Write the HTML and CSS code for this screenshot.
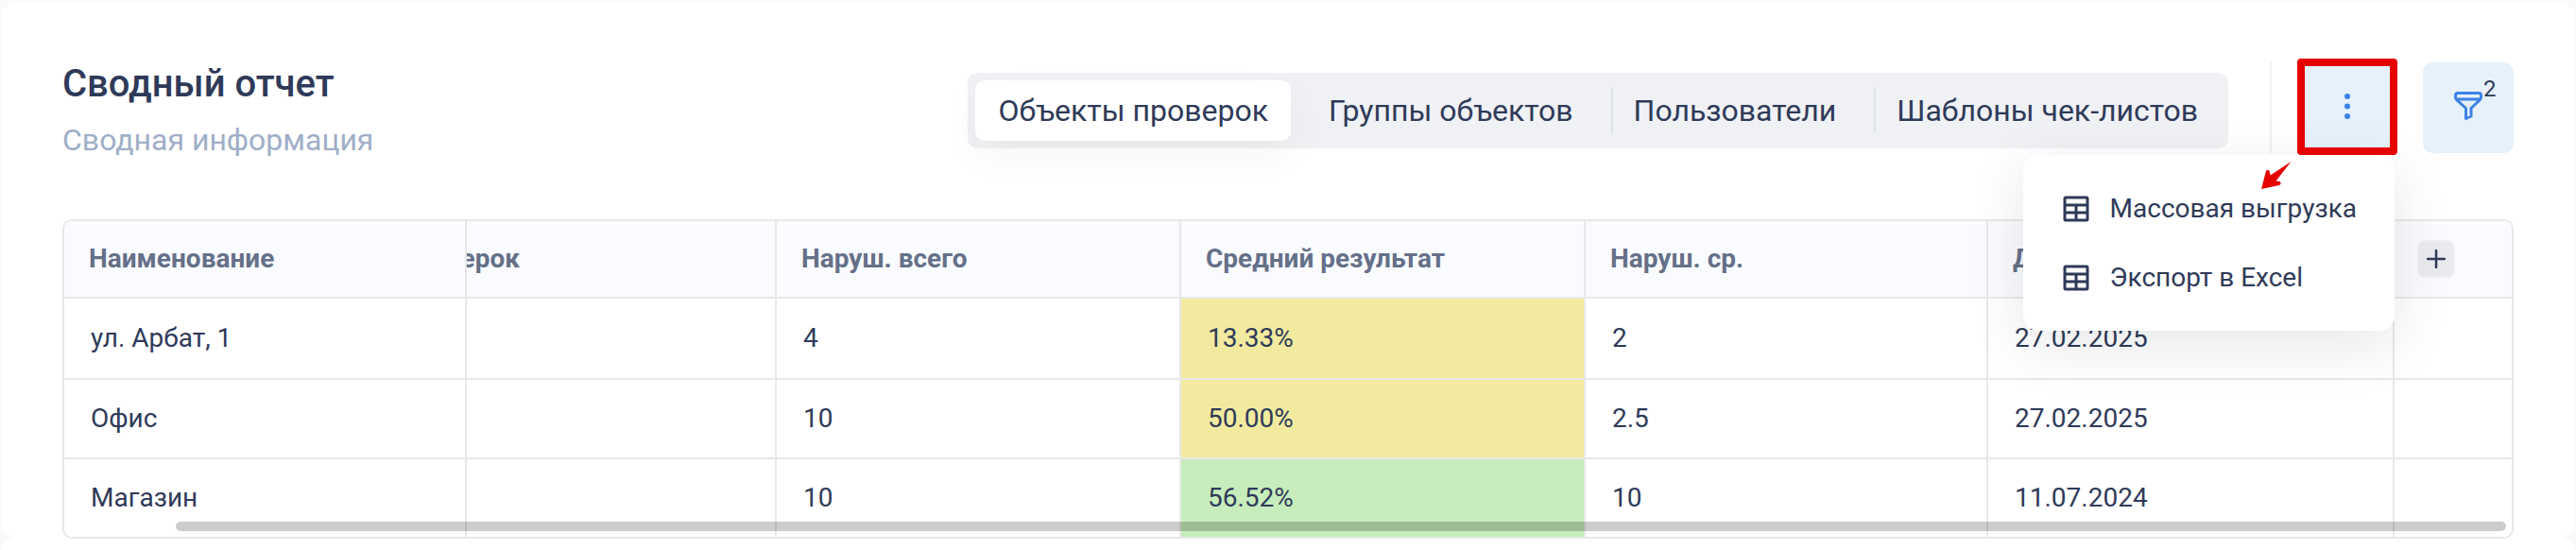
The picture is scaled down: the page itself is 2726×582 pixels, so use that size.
FILE: index.html
```html
<!DOCTYPE html>
<html lang="ru">
<head>
<meta charset="utf-8">
<title>Сводный отчет</title>
<link rel="stylesheet" href="styles.css">
</head>
<body>
<main class="card">
  <header class="header">
    <div class="heading">
      <h1 class="title">Сводный отчет</h1>
      <p class="subtitle">Сводная информация</p>
    </div>
    <div class="toolbar">
      <nav class="tabs">
        <button class="tab tab-active" type="button">Объекты проверок</button>
        <button class="tab" type="button">Группы объектов</button>
        <span class="tab-sep"></span>
        <button class="tab" type="button">Пользователи</button>
        <span class="tab-sep"></span>
        <button class="tab" type="button">Шаблоны чек-листов</button>
      </nav>
      <span class="divider"></span>
      <div class="more">
        <button class="icon-btn" type="button" aria-label="Действия">
          <svg width="40" height="40" viewBox="0 0 40 40" fill="#3b82e6"><circle cx="20" cy="10" r="3"/><circle cx="20" cy="20.500" r="3"/><circle cx="20" cy="31" r="3"/></svg>
        </button>
        <div class="menu">
          <button class="menu-item" type="button">
            <svg class="menu-icon" viewBox="0 0 28 28" fill="none" stroke="#2f3a59" stroke-width="3"><rect x="2" y="2" width="24" height="24" rx="1"/><path d="M2 10H26M2 18H26M14 10V26"/></svg>
            Массовая выгрузка
          </button>
          <button class="menu-item" type="button">
            <svg class="menu-icon" viewBox="0 0 28 28" fill="none" stroke="#2f3a59" stroke-width="3"><rect x="2" y="2" width="24" height="24" rx="1"/><path d="M2 10H26M2 18H26M14 10V26"/></svg>
            Экспорт в Excel
          </button>
        </div>
        <span class="highlight"></span>
        <svg class="arrow" viewBox="0 0 34 32"><path d="M32.500 1L10.500 15.500L9.500 11Q8 8.500 6 11L1 30L20 26Q23 24 20.500 22L16.500 21.500Z" fill="#e60000"/></svg>
      </div>
      <button class="icon-btn" type="button" aria-label="Фильтр">
        <svg width="32" height="32" viewBox="0 0 32 32" fill="none" stroke="#3b82e6" stroke-width="3" stroke-linejoin="round"><path d="M5 2.500H27Q29.500 2.500 29.500 5V7Q29.500 8.500 28 10L19 18.500V27L13.500 29.500V18.500L4 10Q2.500 8.500 2.500 7V5Q2.500 2.500 5 2.500ZM3 9H29"/></svg>
        <span class="badge">2</span>
      </button>
    </div>
  </header>

  <div class="table-box">
    <table class="table">
      <colgroup><col class="c-name"><col class="c-cut"><col class="c-std"><col class="c-std"><col class="c-mean"><col class="c-date"><col class="c-add"></colgroup>
      <thead>
        <tr>
          <th>Наименование</th>
          <th class="cut"><div class="cut-box"><span>Проверок</span></div></th>
          <th>Наруш. всего</th>
          <th>Средний результат</th>
          <th>Наруш. ср.</th>
          <th>Дата</th>
          <th><button class="add" type="button" aria-label="Добавить столбец"><svg width="20" height="20" viewBox="0 0 20 20" stroke="#2f3a59" stroke-width="2.500" stroke-linecap="round"><path d="M10 1V19M1 10H19"/></svg></button></th>
        </tr>
      </thead>
      <tbody>
        <tr><td>ул. Арбат, 1</td><td></td><td>4</td><td class="mid">13.33%</td><td>2</td><td>27.02.2025</td><td></td></tr>
        <tr><td>Офис</td><td></td><td>10</td><td class="mid">50.00%</td><td>2.5</td><td>27.02.2025</td><td></td></tr>
        <tr><td>Магазин</td><td></td><td>10</td><td class="good">56.52%</td><td>10</td><td>11.07.2024</td><td></td></tr>
      </tbody>
    </table>
    <div class="scroll-thumb"></div>
  </div>
</main>
<section class="card-next"></section>
</body>
</html>
```
FILE: styles.css
```css
* { box-sizing: border-box; }

body {
  display: flex;
  flex-direction: column;
  margin: 0;
  padding: 2px 2px 0;
  min-height: 100vh;
  background: #f9fafc;
  color: #2f3a59;
  font-family: Roboto, "Liberation Sans", sans-serif;
  font-size: 28px;
}

button {
  margin: 0;
  padding: 0;
  border: 0;
  background: none;
  color: inherit;
  font: inherit;
}

.card {
  padding: 64px 64px 0;
  border-radius: 16px;
  background: #fff;
}

.card-next {
  flex: 1;
  border-radius: 16px 16px 0 0;
  background: #fff;
}

.header {
  display: flex;
  justify-content: space-between;
  height: 166px;
}

.title {
  margin: 0;
  font-size: 40px;
  font-weight: 500;
  line-height: 46px;
}

.subtitle {
  margin: 16px 0 0;
  color: #a0aec8;
  font-size: 32px;
  line-height: 40px;
}

.toolbar {
  display: flex;
  align-items: flex-start;
}

.tabs {
  display: flex;
  align-items: center;
  gap: 16px;
  height: 80px;
  margin-top: 11px;
  padding: 8px;
  border-radius: 10px;
  background: #f0f1f5;
}

.tab {
  height: 64px;
  padding: 0 24px;
  border-radius: 10px;
  font-size: 32px;
  white-space: nowrap;
}

.tab-sep + .tab { margin-left: -18px; }

.tab-active {
  background: #fff;
  box-shadow: 0 16px 40px rgba(0, 0, 0, 0.04);
}

.tab-sep {
  width: 2px;
  height: 48px;
  background: #dfe2e8;
}

.divider {
  width: 2px;
  height: 96px;
  margin: 0 32px 0 44px;
  background: #eeeff6;
}

.more {
  position: relative;
  margin-right: 32px;
}

.icon-btn {
  position: relative;
  display: flex;
  align-items: center;
  justify-content: center;
  width: 96px;
  height: 96px;
  border-radius: 10px;
  background: #e6f1fa;
}

.icon-btn svg { margin-bottom: 4px; }

.badge {
  position: absolute;
  top: 14px;
  left: 64px;
  font-size: 24px;
  line-height: 28px;
}

.highlight {
  position: absolute;
  z-index: 3;
  top: -4px;
  left: -5px;
  width: 106px;
  height: 102px;
  border: 8px solid #e60000;
  border-radius: 4px;
}

.arrow {
  position: absolute;
  z-index: 3;
  top: 104px;
  left: -44px;
  width: 34px;
  height: 32px;
}

.menu {
  position: absolute;
  z-index: 2;
  top: 98px;
  right: -2px;
  padding: 20px 40px 20px 42px;
  border-radius: 16px;
  background: #fff;
  box-shadow: 0 16px 60px rgba(0, 16, 16, 0.1);
}

.menu-item {
  display: flex;
  align-items: center;
  gap: 22px;
  height: 73px;
  white-space: nowrap;
}

.menu-icon {
  width: 28px;
  height: 28px;
}

.table-box {
  position: relative;
  overflow: hidden;
  border: 2px solid #e8e8e8;
  border-radius: 10px;
}

.table {
  width: 100%;
  table-layout: fixed;
  border-collapse: separate;
  border-spacing: 0;
}

.c-name { width: 426px; }
.c-cut { width: 328px; }
.c-std { width: 428px; }
.c-mean { width: 426px; }
.c-date { width: 430px; }

th, td {
  padding: 0 0 2px 28px;
  border-right: 2px solid #e8e8e8;
  border-bottom: 2px solid #e8e8e8;
  text-align: left;
}

th:last-child, td:last-child { border-right: 0; }

th {
  height: 82px;
  padding-left: 26px;
  background: #fafbff;
  color: #657089;
  font-weight: 700;
}

th:last-child { padding: 0 0 0 24px; }

td { height: 84px; }

tbody tr:first-child td { height: 86px; }

tbody tr:last-child td {
  height: 82px;
  border-bottom: 0;
}

th.cut { padding-left: 0; }

.cut-box {
  display: flex;
  justify-content: flex-end;
  width: 56px;
  overflow: hidden;
}

.mid { background: #f2eb9f; }
.good { background: #c6edbb; }

.add {
  display: flex;
  align-items: center;
  justify-content: center;
  width: 40px;
  height: 40px;
  border: 2px solid #eff0f4;
  border-radius: 8px;
  background: #e8eaee;
}

.scroll-thumb {
  position: absolute;
  right: 6px;
  bottom: 6px;
  left: 118px;
  height: 10px;
  border-radius: 5px;
  background: rgba(0, 0, 0, 0.2);
}
```
